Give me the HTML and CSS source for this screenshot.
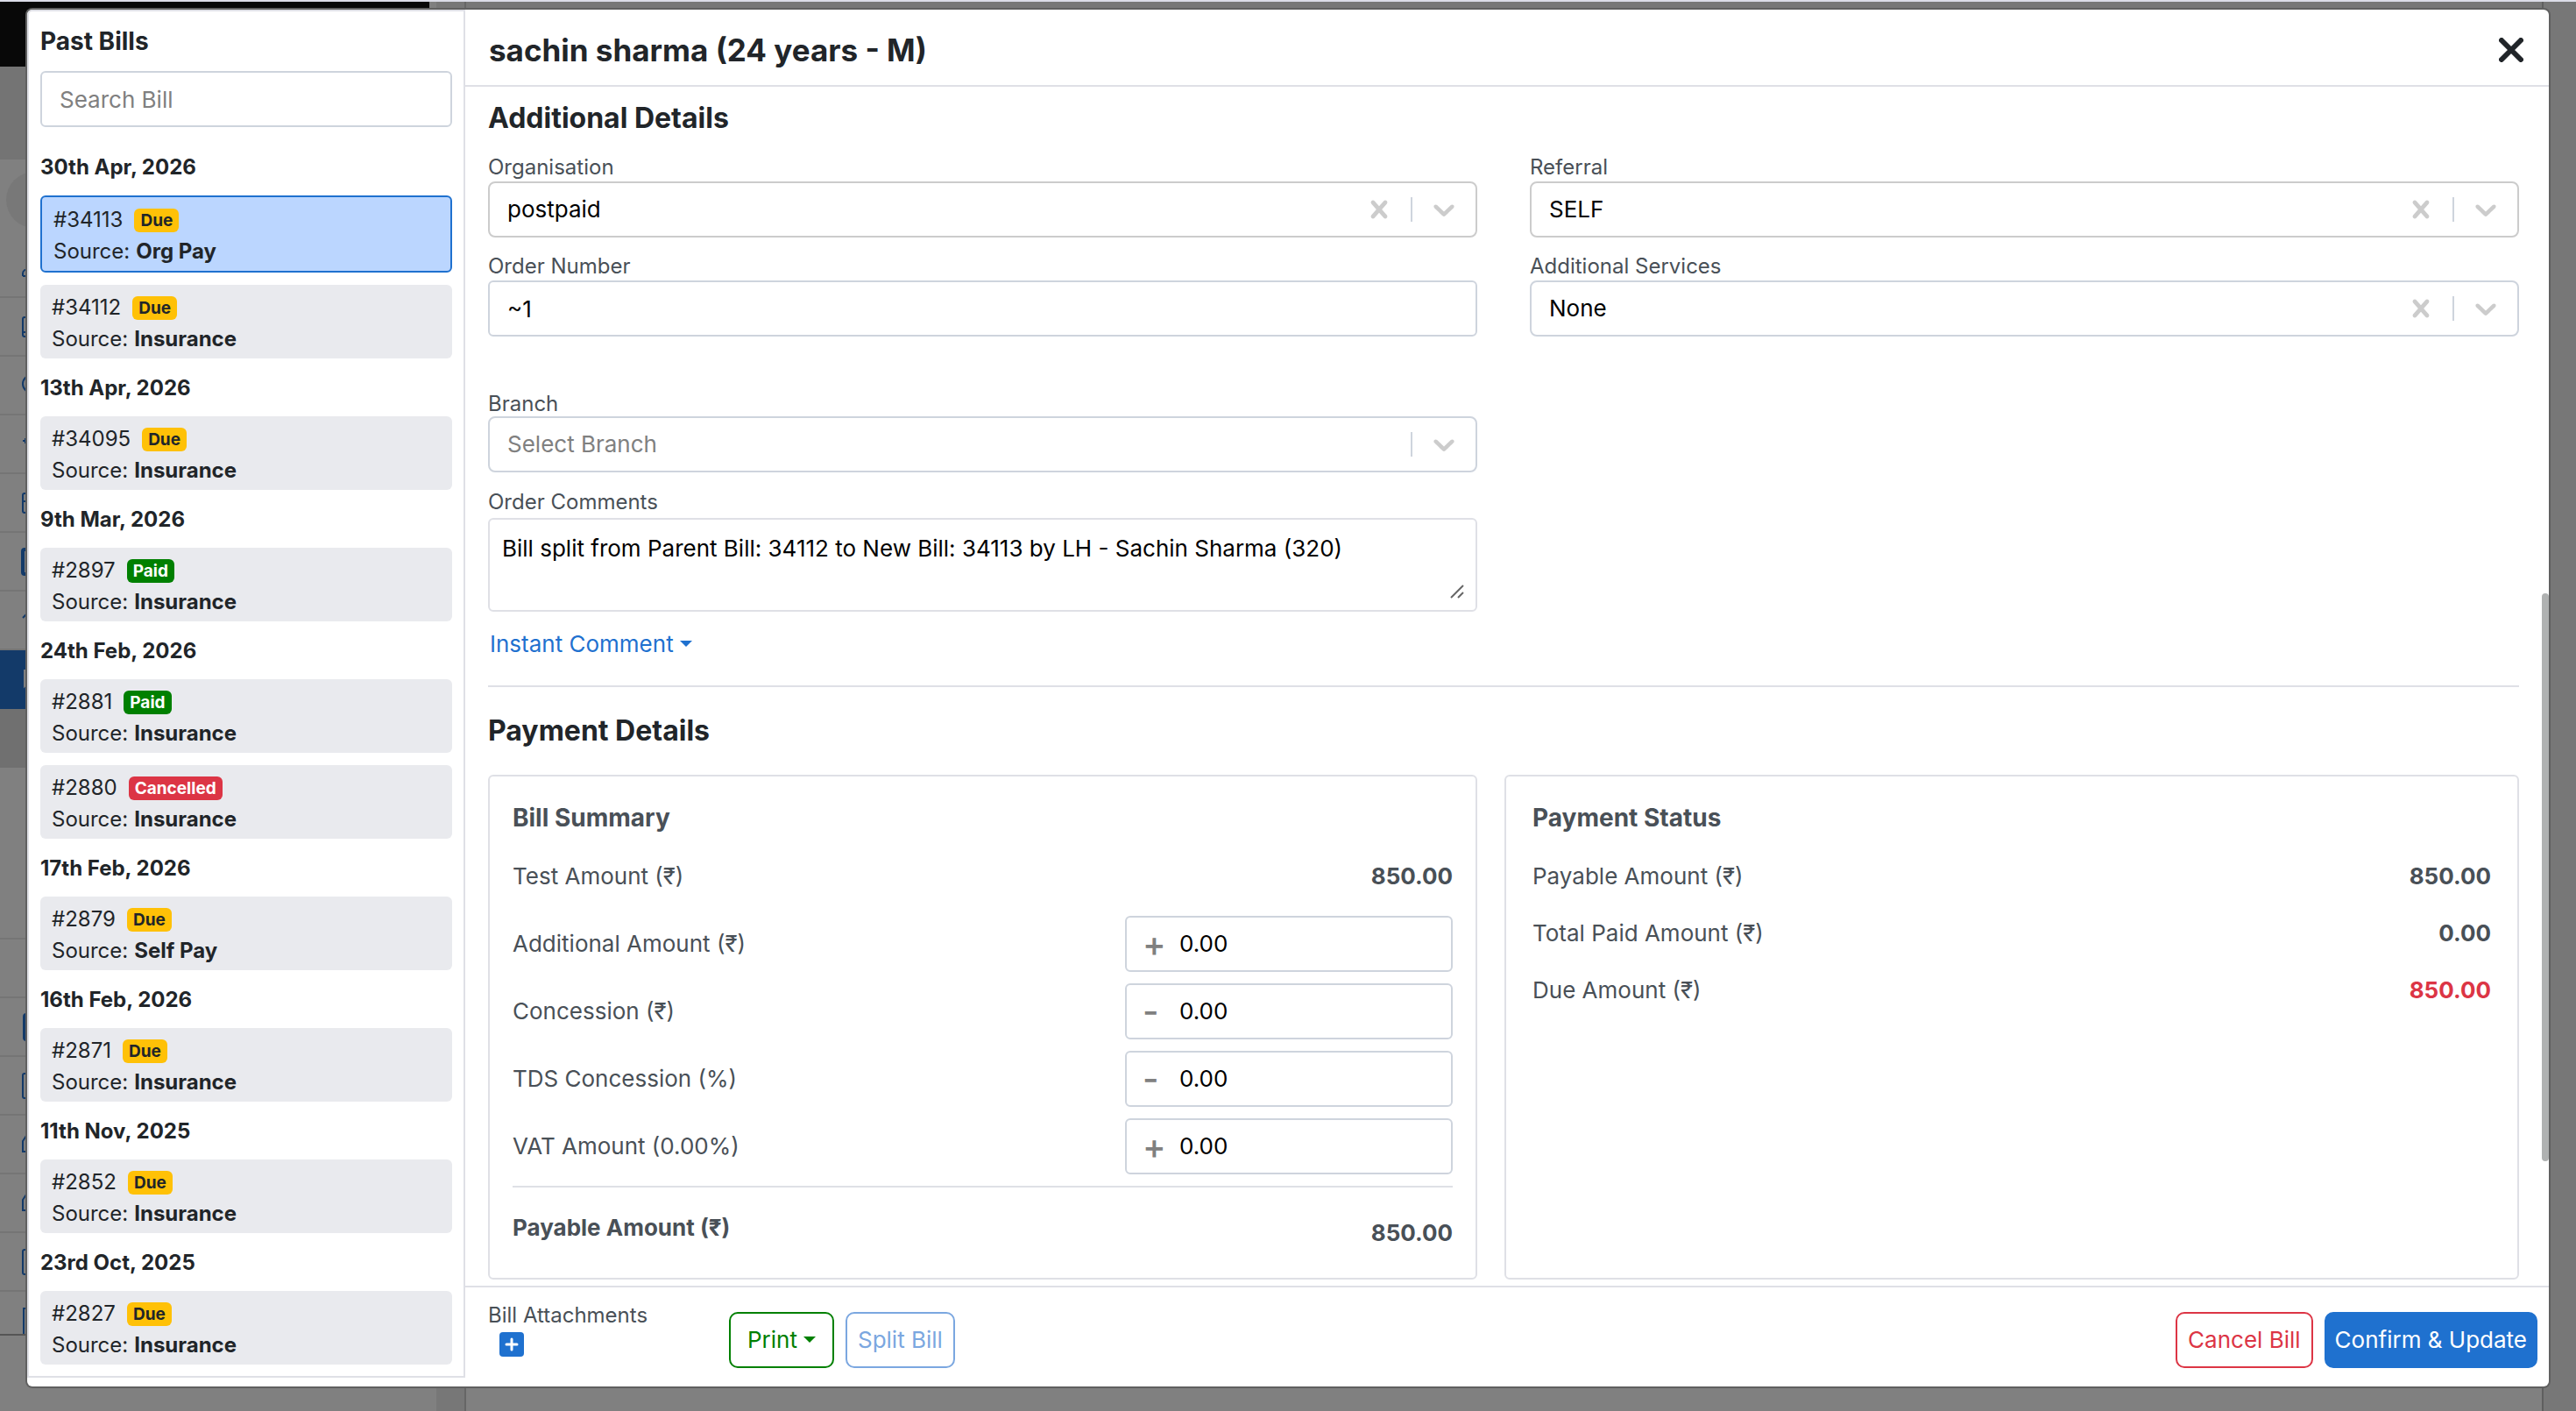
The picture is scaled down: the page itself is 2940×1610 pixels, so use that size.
FILE: index.html
```html
<!DOCTYPE html>
<html lang="en">
<head>
  <meta charset="UTF-8">
  <meta name="viewport" content="width=device-width, initial-scale=1.0">
  <title>Bill Details</title>
  <link rel="stylesheet" href="styles.css">
</head>
<body>
  <!-- Page behind the modal -->
  <div class="app" aria-hidden="true">
    <div class="app-nav">
      <div class="app-brand"></div>
      <div class="app-user"></div>
      <div class="app-avatar"></div>
      <div class="nav-item"><svg viewBox="0 0 24 32"><path d="M2 25v-3c0-3 3-5 7-5M2 25h10"/></svg></div>
      <div class="nav-item"><svg viewBox="0 0 24 32"><rect x="2" y="5" width="20" height="22" rx="2"/><path d="M2 22h20"/></svg></div>
      <div class="nav-item"><svg viewBox="0 0 24 32"><circle cx="12" cy="14" r="10"/></svg></div>
      <div class="nav-item"><svg viewBox="0 0 24 32"><path d="M2 12h6M5 9v6"/></svg></div>
      <div class="nav-item"><svg viewBox="0 0 24 32"><rect x="2" y="5" width="20" height="22" rx="2"/><path d="M2 14h20M6 22h4"/></svg></div>
      <div class="nav-item"><svg class="thick" viewBox="0 0 24 32"><rect x="2" y="2" width="20" height="28" rx="2"/></svg></div>
      <div class="nav-item"><svg viewBox="0 0 24 32"><path d="M2 13l5-5v12"/></svg></div>
      <div class="nav-item active"><svg viewBox="0 0 24 32"><path d="M20 6H4v18l3-3h13"/></svg></div>
      <div class="nav-heading"></div>
      <div class="nav-space"></div>
      <div class="nav-item"></div>
      <div class="nav-item"><svg class="thick" viewBox="0 0 24 32"><rect x="4" y="2" width="20" height="28" rx="2"/></svg></div>
      <div class="nav-item"><svg viewBox="0 0 24 32"><rect x="2" y="2" width="20" height="28" rx="2"/></svg></div>
      <div class="nav-item"><svg viewBox="0 0 24 32"><path d="M14 6H6l-4 6v12h14"/></svg></div>
      <div class="nav-item"><svg viewBox="0 0 24 32"><path d="M14 6H6l-4 6v12h14"/></svg></div>
      <div class="nav-item"><svg viewBox="0 0 24 32"><rect x="2" y="2" width="20" height="28" rx="2"/><path d="M5 14h6M5 22h6"/></svg></div>
      <div class="nav-item last"><svg viewBox="0 0 24 32"><path d="M20 3H3v29M7 9h8M7 15h8"/></svg></div>
    </div>
    <div class="app-gutter"></div>
    <div class="app-content"><div class="app-topbar"></div></div>
    <div class="app-edge"></div>
  </div>

  <div class="modal-wrap">
    <div class="modal" role="dialog" aria-labelledby="modal-title">
      <aside class="past-bills">
        <h2>Past Bills</h2>
        <input class="form-control" type="text" placeholder="Search Bill" aria-label="Search Bill">

        <h3>30th Apr, 2026</h3>
        <div class="bill selected">
          <div>#34113 <span class="badge due">Due</span></div>
          <div>Source: <b>Org Pay</b></div>
        </div>
        <div class="bill">
          <div>#34112 <span class="badge due">Due</span></div>
          <div>Source: <b>Insurance</b></div>
        </div>

        <h3>13th Apr, 2026</h3>
        <div class="bill">
          <div>#34095 <span class="badge due">Due</span></div>
          <div>Source: <b>Insurance</b></div>
        </div>

        <h3>9th Mar, 2026</h3>
        <div class="bill">
          <div>#2897 <span class="badge paid">Paid</span></div>
          <div>Source: <b>Insurance</b></div>
        </div>

        <h3>24th Feb, 2026</h3>
        <div class="bill">
          <div>#2881 <span class="badge paid">Paid</span></div>
          <div>Source: <b>Insurance</b></div>
        </div>
        <div class="bill">
          <div>#2880 <span class="badge cancelled">Cancelled</span></div>
          <div>Source: <b>Insurance</b></div>
        </div>

        <h3>17th Feb, 2026</h3>
        <div class="bill">
          <div>#2879 <span class="badge due">Due</span></div>
          <div>Source: <b>Self Pay</b></div>
        </div>

        <h3>16th Feb, 2026</h3>
        <div class="bill">
          <div>#2871 <span class="badge due">Due</span></div>
          <div>Source: <b>Insurance</b></div>
        </div>

        <h3>11th Nov, 2025</h3>
        <div class="bill">
          <div>#2852 <span class="badge due">Due</span></div>
          <div>Source: <b>Insurance</b></div>
        </div>

        <h3>23rd Oct, 2025</h3>
        <div class="bill">
          <div>#2827 <span class="badge due">Due</span></div>
          <div>Source: <b>Insurance</b></div>
        </div>
      </aside>

      <main class="details">
        <header class="modal-header">
          <h1 id="modal-title">sachin sharma (24 years - M)</h1>
          <button class="close" type="button" aria-label="Close">
            <svg viewBox="0 0 28 28"><path d="M3 3l22 22M25 3L3 25"/></svg>
          </button>
        </header>

        <div class="modal-body">
          <h2>Additional Details</h2>
          <div class="form-grid">
            <div class="field">
              <label for="organisation">Organisation</label>
              <div class="select focused">
                <select id="organisation"><option>postpaid</option></select>
                <button type="button" aria-label="Clear organisation"><svg viewBox="0 0 20 20"><path d="M14.348 14.849c-0.469 0.469-1.229 0.469-1.697 0l-2.651-3.030-2.651 3.029c-0.469 0.469-1.229 0.469-1.697 0-0.469-0.469-0.469-1.229 0-1.697l2.758-3.15-2.759-3.152c-0.469-0.469-0.469-1.228 0-1.697s1.228-0.469 1.697 0l2.652 3.031 2.651-3.031c0.469-0.469 1.228-0.469 1.697 0s0.469 1.229 0 1.697l-2.758 3.152 2.758 3.15c0.469 0.469 0.469 1.229 0 1.698z"/></svg></button>
                <span class="separator"></span>
                <svg viewBox="0 0 20 20"><path d="M4.516 7.548c0.436-0.446 1.043-0.481 1.576 0l3.908 3.747 3.908-3.747c0.533-0.481 1.141-0.446 1.574 0 0.436 0.445 0.408 1.197 0 1.615-0.406 0.418-4.695 4.502-4.695 4.502-0.217 0.223-0.502 0.335-0.787 0.335s-0.57-0.112-0.789-0.335c0 0-4.287-4.084-4.695-4.502s-0.436-1.17 0-1.615z"/></svg>
              </div>
            </div>
            <div class="field">
              <label for="referral">Referral</label>
              <div class="select focused">
                <select id="referral"><option>SELF</option></select>
                <button type="button" aria-label="Clear referral"><svg viewBox="0 0 20 20"><path d="M14.348 14.849c-0.469 0.469-1.229 0.469-1.697 0l-2.651-3.030-2.651 3.029c-0.469 0.469-1.229 0.469-1.697 0-0.469-0.469-0.469-1.229 0-1.697l2.758-3.15-2.759-3.152c-0.469-0.469-0.469-1.228 0-1.697s1.228-0.469 1.697 0l2.652 3.031 2.651-3.031c0.469-0.469 1.228-0.469 1.697 0s0.469 1.229 0 1.697l-2.758 3.152 2.758 3.15c0.469 0.469 0.469 1.229 0 1.698z"/></svg></button>
                <span class="separator"></span>
                <svg viewBox="0 0 20 20"><path d="M4.516 7.548c0.436-0.446 1.043-0.481 1.576 0l3.908 3.747 3.908-3.747c0.533-0.481 1.141-0.446 1.574 0 0.436 0.445 0.408 1.197 0 1.615-0.406 0.418-4.695 4.502-4.695 4.502-0.217 0.223-0.502 0.335-0.787 0.335s-0.57-0.112-0.789-0.335c0 0-4.287-4.084-4.695-4.502s-0.436-1.17 0-1.615z"/></svg>
              </div>
            </div>
            <div class="field">
              <label for="order-number">Order Number</label>
              <input class="form-control" id="order-number" type="text" value="~1">
            </div>
            <div class="field">
              <label for="services">Additional Services</label>
              <div class="select">
                <select id="services"><option>None</option></select>
                <button type="button" aria-label="Clear services"><svg viewBox="0 0 20 20"><path d="M14.348 14.849c-0.469 0.469-1.229 0.469-1.697 0l-2.651-3.030-2.651 3.029c-0.469 0.469-1.229 0.469-1.697 0-0.469-0.469-0.469-1.229 0-1.697l2.758-3.15-2.759-3.152c-0.469-0.469-0.469-1.228 0-1.697s1.228-0.469 1.697 0l2.652 3.031 2.651-3.031c0.469-0.469 1.228-0.469 1.697 0s0.469 1.229 0 1.697l-2.758 3.152 2.758 3.15c0.469 0.469 0.469 1.229 0 1.698z"/></svg></button>
                <span class="separator"></span>
                <svg viewBox="0 0 20 20"><path d="M4.516 7.548c0.436-0.446 1.043-0.481 1.576 0l3.908 3.747 3.908-3.747c0.533-0.481 1.141-0.446 1.574 0 0.436 0.445 0.408 1.197 0 1.615-0.406 0.418-4.695 4.502-4.695 4.502-0.217 0.223-0.502 0.335-0.787 0.335s-0.57-0.112-0.789-0.335c0 0-4.287-4.084-4.695-4.502s-0.436-1.17 0-1.615z"/></svg>
              </div>
            </div>
          </div>

          <div class="form-grid order-info">
            <div>
              <div class="field branch">
                <label for="branch">Branch</label>
                <div class="select empty">
                  <select id="branch"><option>Select Branch</option></select>
                  <span class="separator"></span>
                  <svg viewBox="0 0 20 20"><path d="M4.516 7.548c0.436-0.446 1.043-0.481 1.576 0l3.908 3.747 3.908-3.747c0.533-0.481 1.141-0.446 1.574 0 0.436 0.445 0.408 1.197 0 1.615-0.406 0.418-4.695 4.502-4.695 4.502-0.217 0.223-0.502 0.335-0.787 0.335s-0.57-0.112-0.789-0.335c0 0-4.287-4.084-4.695-4.502s-0.436-1.17 0-1.615z"/></svg>
                </div>
              </div>
              <div class="field comments">
                <label for="comments">Order Comments</label>
                <textarea id="comments">Bill split from Parent Bill: 34112 to New Bill: 34113 by LH - Sachin Sharma (320)</textarea>
                <svg class="grip" viewBox="0 0 16 16"><path d="M1 15L15 1M9 15l6-6"/></svg>
              </div>
              <button class="link-btn caret" type="button">Instant Comment</button>
            </div>
          </div>

          <hr>

          <h2>Payment Details</h2>
          <div class="payment">
            <section class="card">
              <h3>Bill Summary</h3>
              <div class="row">
                <span>Test Amount (₹)</span>
                <b>850.00</b>
              </div>
              <div class="row">
                <label for="additional">Additional Amount (₹)</label>
                <div class="amount"><span>+</span><input id="additional" type="text" value="0.00"></div>
              </div>
              <div class="row">
                <label for="concession">Concession (₹)</label>
                <div class="amount"><span>-</span><input id="concession" type="text" value="0.00"></div>
              </div>
              <div class="row">
                <label for="tds">TDS Concession (%)</label>
                <div class="amount"><span>-</span><input id="tds" type="text" value="0.00"></div>
              </div>
              <div class="row">
                <label for="vat">VAT Amount (0.00%)</label>
                <div class="amount"><span>+</span><input id="vat" type="text" value="0.00"></div>
              </div>
              <div class="row total">
                <b>Payable Amount (₹)</b>
                <b class="total-value">850.00</b>
              </div>
            </section>
            <section class="card status">
              <h3>Payment Status</h3>
              <div class="row">
                <span>Payable Amount (₹)</span>
                <b>850.00</b>
              </div>
              <div class="row">
                <span>Total Paid Amount (₹)</span>
                <b>0.00</b>
              </div>
              <div class="row">
                <span>Due Amount (₹)</span>
                <b class="text-danger">850.00</b>
              </div>
            </section>
          </div>
        </div>

        <footer class="modal-footer">
          <div class="attachments">
            <span>Bill Attachments</span>
            <button type="button" aria-label="Add attachment">
              <svg viewBox="0 0 28 28"><path d="M14 8v12M8 14h12"/></svg>
            </button>
          </div>
          <div class="actions">
            <button class="btn print caret" type="button">Print</button>
            <button class="btn split" type="button">Split Bill</button>
          </div>
          <div class="actions right">
            <button class="btn cancel" type="button">Cancel Bill</button>
            <button class="btn confirm" type="button">Confirm &amp; Update</button>
          </div>
        </footer>
        <div class="scroll-thumb"></div>
      </main>
    </div>
  </div>
</body>
</html>
```
FILE: styles.css
```css
* {
  box-sizing: border-box;
}
body {
  margin: 0;
  font-family: Inter, "Liberation Sans", sans-serif;
  font-size: 26px;
  line-height: 40px;
  color: #212529;
}
h1, h2, h3 {
  margin: 0;
  font-weight: 700;
}
b {
  font-weight: 700;
}
button, input, select, textarea {
  font: inherit;
  margin: 0;
}
button {
  padding: 0;
  border: 0;
  background: none;
  cursor: pointer;
}

/* Page behind the modal */
.app {
  position: absolute;
  inset: 0;
  display: flex;
  overflow: hidden;
  background-color: #808080;
  border-top: 2px solid #dcdde8;
}
.app-nav {
  width: 498px;
  flex-shrink: 0;
}
.app-brand {
  width: 490px;
  height: 74px;
  background-color: #080808;
}
.app-user {
  height: 106px;
  background-color: #747474;
}
.app-avatar {
  width: 64px;
  height: 64px;
  margin: 14px 0 13px 7px;
  border-radius: 50%;
  background-color: #787878;
}
.nav-item {
  display: flex;
  align-items: center;
  height: 67px;
  padding-left: 24px;
  border-bottom: 2px solid #757575;
}
.nav-item svg {
  width: 24px;
  height: 32px;
  fill: none;
  stroke: #133a69;
  stroke-width: 2;
}
.nav-item svg.thick {
  stroke-width: 4;
}
.nav-item.active {
  background-color: #133a69;
  border-color: #133a69;
}
.nav-item.active svg {
  stroke: #808080;
}
.nav-item.last {
  height: 50px;
  align-items: flex-end;
  border-color: #555;
}
.nav-heading {
  height: 67px;
  background-color: #707070;
}
.nav-space {
  height: 196px;
  border-bottom: 2px solid #757575;
}
.app-gutter {
  width: 34px;
  flex-shrink: 0;
  background-color: #777;
  border-right: 2px solid #666;
}
.app-content {
  flex: 1;
  border-right: 2px solid #5f5f5f;
}
.app-topbar {
  height: 74px;
  background-color: #777;
}
.app-edge {
  width: 37px;
  background-color: #777;
}

/* Modal */
.modal-wrap {
  position: relative;
  display: flex;
  min-height: 100vh;
  padding: 11px 31px 28px;
}
.modal {
  flex: 1;
  display: grid;
  grid-template-columns: 500px 1fr;
  background-color: #fff;
  border-radius: 6px;
  box-shadow: 0 0 0 2px #606060;
}

/* Past bills */
.past-bills {
  margin-bottom: 10px;
  padding: 14px 13px 0;
  border: 2px solid #dfe0e6;
  border-top-left-radius: 6px;
  font-size: 24px;
  line-height: 36px;
}
.past-bills h2 {
  margin-bottom: 14px;
  font-size: 28px;
  line-height: 40px;
}
.past-bills h3 {
  margin-bottom: 12px;
  font-size: 24px;
  line-height: 40px;
}
.past-bills .form-control {
  margin-bottom: 26px;
}
.bill {
  margin-bottom: 14px;
  padding: 8px 13px 4px;
  border-radius: 6px;
  background-color: #e9eaee;
}
.bill:last-child {
  margin-bottom: 12px;
}
.bill.selected {
  border: 2px solid #1f71cf;
  background-color: #bbd6ff;
}
.bill > div {
  display: flex;
  align-items: center;
  gap: 7px;
}
.badge {
  margin-left: 6px;
  padding: 0 7px;
  border-radius: 6px;
  font-size: 19px;
  font-weight: 700;
  line-height: 27px;
}
.due {
  background-color: #ffc107;
}
.paid {
  background-color: #008000;
  color: #fff;
}
.cancelled {
  background-color: #dc3545;
  color: #fff;
}

/* Form controls */
.form-control {
  display: block;
  width: 100%;
  height: 64px;
  padding: 0 20px;
  border: 2px solid #ced4dd;
  border-radius: 6px;
  background-color: #fff;
  color: #000;
  font-size: 26px;
}
.form-control::placeholder {
  color: #808080;
  opacity: 1;
}
.form-grid {
  display: grid;
  grid-template-columns: 1fr 1fr;
  gap: 16px 60px;
}
.field label {
  display: block;
  font-size: 24px;
  line-height: 33px;
  color: #495057;
}
.select {
  display: flex;
  align-items: center;
  height: 64px;
  padding-right: 16px;
  border: 2px solid #ced4dd;
  border-radius: 8px;
}
.select.focused {
  border-color: #ccc;
}
.select select {
  flex: 1;
  height: 60px;
  padding: 0 20px;
  border: 0;
  appearance: none;
  background: none;
  color: #000;
}
.select.empty select {
  color: #808080;
}
.select button {
  height: 40px;
}
.select svg {
  display: block;
  width: 40px;
  height: 40px;
  fill: #ccc;
}
.separator {
  width: 2px;
  height: 28px;
  margin: 0 16px;
  background-color: #ced4dd;
}

/* Details */
.details {
  position: relative;
  display: flex;
  flex-direction: column;
  min-width: 0;
}
.modal-header {
  display: flex;
  align-items: center;
  justify-content: space-between;
  height: 88px;
  padding: 6px 29px 0 27px;
  border-bottom: 2px solid #dfe0e6;
}
.modal-header h1 {
  font-size: 35px;
  line-height: 44px;
}
.close svg {
  display: block;
  width: 28px;
  height: 28px;
  fill: none;
  stroke: #212529;
  stroke-width: 6;
  stroke-linecap: round;
}
.modal-body {
  flex: 1;
  padding: 14px 34px 6px 26px;
}
.modal-body h2 {
  margin-bottom: 17px;
  font-size: 32px;
  line-height: 44px;
}
.order-info {
  margin-top: 63px;
}
.field.branch {
  margin-bottom: 16px;
}
.branch label {
  line-height: 28px;
}
.comments {
  position: relative;
  margin-bottom: 17px;
}
.comments label {
  line-height: 36px;
}
.comments textarea {
  display: block;
  width: 100%;
  height: 107px;
  padding: 13px 14px;
  border: 2px solid #dfe0e6;
  border-radius: 6px;
  color: #000;
  resize: none;
}
.grip {
  position: absolute;
  right: 15px;
  bottom: 15px;
  width: 16px;
  height: 16px;
  fill: none;
  stroke: #666;
  stroke-width: 2;
}
.link-btn {
  padding-left: 2px;
  color: #1f71cf;
}
.caret::after {
  content: "";
  display: inline-block;
  margin-left: 7px;
  vertical-align: 6px;
  border-top: 7px solid;
  border-left: 7px solid transparent;
  border-right: 7px solid transparent;
}
hr {
  margin: 27px 0 28px;
  border: 0;
  border-top: 2px solid #dfe0e6;
}
.modal-body hr + h2 {
  margin-bottom: 28px;
}

/* Payment cards */
.payment {
  display: grid;
  grid-template-columns: 39fr 40fr;
  gap: 31px;
}
.card {
  padding: 27px 26px 31px;
  border: 2px solid #dfe0e6;
  border-radius: 6px;
  color: #495057;
}
.card.status {
  padding: 27px 30px;
}
.card h3 {
  margin-bottom: 27px;
  font-size: 28px;
}
.row {
  display: flex;
  align-items: center;
  justify-content: space-between;
  margin-bottom: 13px;
}
.card h3 + .row,
.status .row {
  margin-bottom: 25px;
}
.amount {
  display: flex;
  align-items: center;
  width: 374px;
  height: 64px;
  padding: 0 18px;
  border: 2px solid #ced4dd;
  border-radius: 6px;
}
.amount span {
  width: 42px;
  font-size: 40px;
  font-weight: 500;
  color: #808080;
}
.amount input {
  flex: 1;
  min-width: 0;
  padding: 0;
  border: 0;
  outline: 0;
  color: #000;
}
.row.total {
  align-items: flex-start;
  margin-bottom: 0;
  padding-top: 26px;
  border-top: 2px solid #dfe0e6;
}
.total-value {
  padding-top: 6px;
}
.text-danger {
  color: #dc3545;
}

/* Footer */
.modal-footer {
  display: flex;
  align-items: flex-start;
  padding: 17px 13px 21px 26px;
  border-top: 2px solid #dfe0e6;
}
.attachments {
  width: 275px;
  font-size: 24px;
  line-height: 30px;
  color: #495057;
}
.attachments button {
  display: block;
  margin: 4px 0 0 13px;
  border-radius: 4px;
  background-color: #1f71cf;
}
.attachments svg {
  display: block;
  width: 28px;
  height: 28px;
  stroke: #fff;
  stroke-width: 3;
  stroke-linecap: round;
}
.actions {
  display: flex;
  gap: 13px;
  margin-top: 11px;
}
.actions.right {
  margin-left: auto;
}
.btn {
  height: 64px;
  padding: 0 12px;
  border: 2px solid;
  border-radius: 10px;
}
.btn.print {
  padding: 0 19px;
  color: #008000;
}
.btn.split {
  color: #7ba7e0;
}
.btn.cancel {
  color: #dc3545;
}
.btn.confirm {
  padding: 0 10px;
  border-color: #1f71cf;
  background-color: #1f71cf;
  color: #fff;
}
.scroll-thumb {
  position: absolute;
  top: 666px;
  right: 0;
  width: 8px;
  height: 648px;
  border-radius: 4px;
  background-color: #afb1b1;
}
```
